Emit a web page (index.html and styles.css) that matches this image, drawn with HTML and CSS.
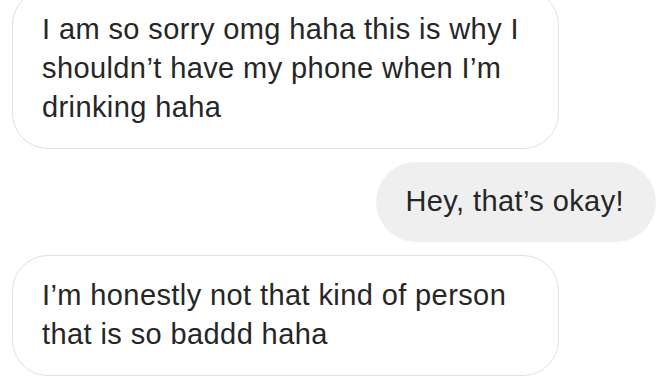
FILE: index.html
```html
<!DOCTYPE html>
<html lang="en">
<head>
    <meta charset="UTF-8">
    <meta name="viewport" content="width=device-width, initial-scale=1.0">
    <title>Messages</title>
    <link rel="stylesheet" href="styles.css">
</head>
<body>
    <div class="thread">
        <div class="message incoming">
            I am so sorry omg haha this is why I<br>
            shouldn’t have my phone when I’m<br>
            drinking haha
        </div>

        <div class="message outgoing">Hey, that’s okay!</div>

        <div class="message incoming">
            I’m honestly not that kind of person<br>
            that is so baddd haha
        </div>
    </div>
</body>
</html>
```

FILE: styles.css
```css
body {
    margin: 0;
    background-color: #fff;
    font-family: 'Liberation Sans', Arial, sans-serif;
    color: #262626;
    overflow: hidden;
}

.thread {
    display: flex;
    flex-direction: column;
    gap: 13px;
    margin-top: -11px;
    padding: 0 16px 0 12px;
}

.message {
    font-size: 29px;
    letter-spacing: 0.4px;
    line-height: 39px;
    border-radius: 36px;
    padding: 20px 38px 21px 29px;
    box-sizing: border-box;
    white-space: nowrap;
}

.incoming {
    align-self: flex-start;
    width: 547px;
    border: 1.5px solid #e0e0e0;
}

.outgoing {
    align-self: flex-end;
    padding: 20px 32px 21px 30px;
    border-radius: 40px;
    background-color: #efefef;
}
```
